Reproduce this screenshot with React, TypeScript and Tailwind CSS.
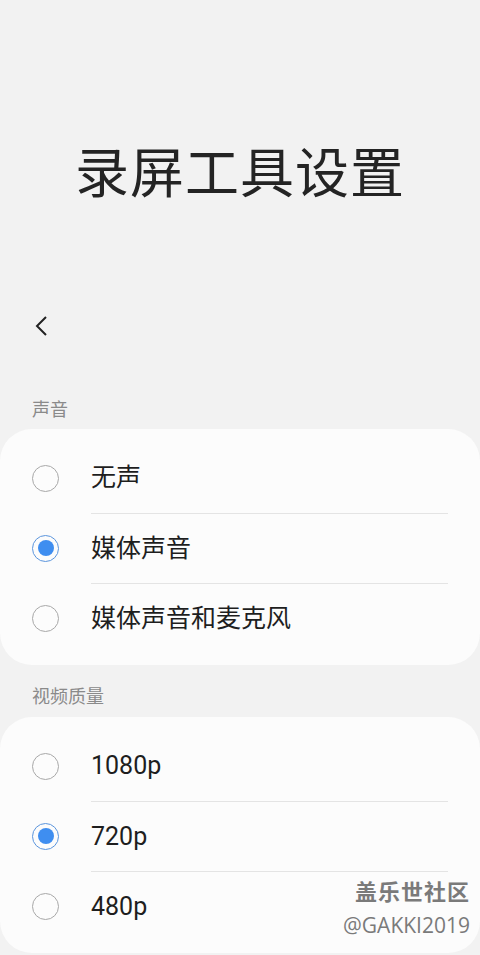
import React from "react"

const font = { fontFamily: "Roboto, 'Noto Sans CJK SC', sans-serif" }

interface Option {
  label: string
  checked?: boolean
}

function Radio({ checked }: { checked?: boolean }) {
  if (checked) {
    return (
      <div className="w-[27px] h-[27px] rounded-full border-[1.5px] border-[#5b95dd] flex items-center justify-center">
        <div className="w-[16px] h-[16px] rounded-full bg-[#3f8ef0]" />
      </div>
    )
  }
  return <div className="w-[27px] h-[27px] rounded-full border-[1.5px] border-[#a8a8a8]" />
}

function Group({ title, options, first }: { title: string; options: Option[]; first?: boolean }) {
  return (
    <div>
      <div
        className={`px-[32px] flex items-end text-[18px] text-[#8a8a8a] ${
          first ? "h-[69px] pb-[6px]" : "h-[52px] pb-[7px]"
        }`}
      >
        {title}
      </div>
      <div className="bg-[#fcfcfc] rounded-[32px] pt-[14px] pb-[12px]">
        {options.map((o, i) => (
          <div key={o.label} className="flex items-center h-[70px]">
            <div className="w-[91px] flex pl-[32px]">
              <Radio checked={o.checked} />
            </div>
            <div
              className={`flex-1 h-full flex items-center mr-[32px] text-[25px] text-[#1e1e1e] ${
                i > 0 ? "border-t border-[#e4e4e4]" : ""
              }`}
            >
              {o.label}
            </div>
          </div>
        ))}
      </div>
    </div>
  )
}

export default function App() {
  return (
    <div className="relative w-[480px] h-[955px] bg-[#f2f2f2] overflow-hidden" style={font}>
      <div className="h-[290px] flex items-start justify-center pt-[140px]">
        <h1 className="text-[54px] leading-[70px] text-[#242424] tracking-[1px]">录屏工具设置</h1>
      </div>
      <div className="h-[70px] flex items-center pl-[30px] pt-[2px]">
        <svg width="24" height="24" viewBox="0 0 24 24" fill="none" stroke="#222" strokeWidth="2">
          <path d="M16 3 L7 12 L16 21" />
        </svg>
      </div>
      <Group
        first
        title="声音"
        options={[{ label: "无声" }, { label: "媒体声音", checked: true }, { label: "媒体声音和麦克风" }]}
      />
      <Group title="视频质量" options={[{ label: "1080p" }, { label: "720p", checked: true }, { label: "480p" }]} />
      <div className="absolute right-[10px] top-[882px] flex flex-col items-end text-[#7a7a7a] leading-none">
        <span className="text-[22px] font-bold tracking-[1px]">盖乐世社区</span>
        <span className="text-[21px] mt-[11px]" style={{ fontFamily: "'Open Sans', sans-serif" }}>
          @GAKKI2019
        </span>
      </div>
    </div>
  )
}
